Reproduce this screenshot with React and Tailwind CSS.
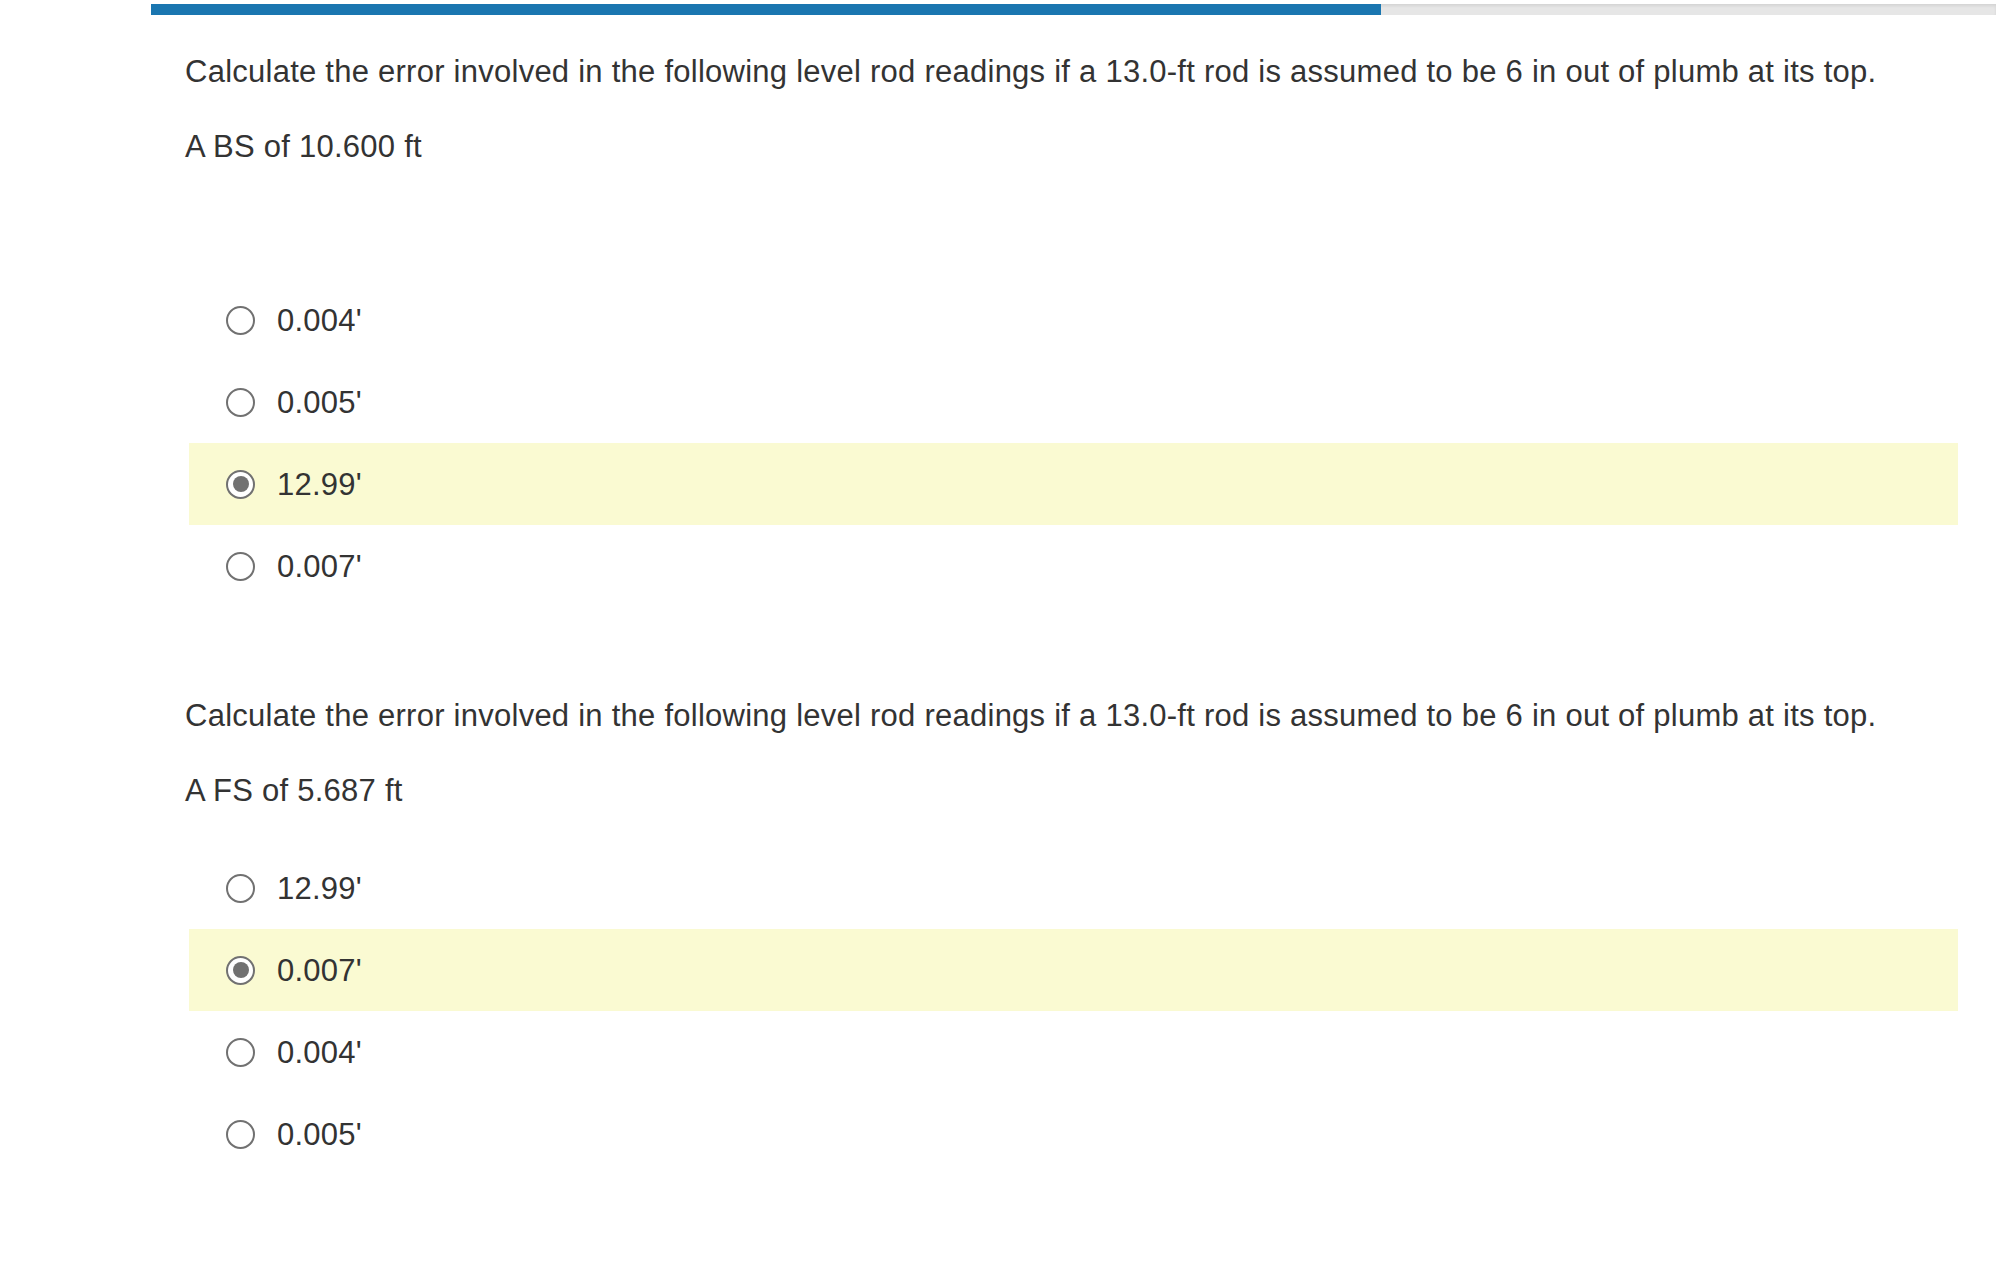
import React from 'react';

const questions = [
  {
    text: 'Calculate the error involved in the following level rod readings if a 13.0-ft rod is assumed to be 6 in out of plumb at its top.',
    sub: 'A BS of 10.600 ft',
    subGap: 'mb-[110px]',
    options: ["0.004'", "0.005'", "12.99'", "0.007'"],
    selected: 2,
  },
  {
    text: 'Calculate the error involved in the following level rod readings if a 13.0-ft rod is assumed to be 6 in out of plumb at its top.',
    sub: 'A FS of 5.687 ft',
    subGap: 'mb-[34px]',
    options: ["12.99'", "0.007'", "0.004'", "0.005'"],
    selected: 1,
  },
];

function Radio({ checked }) {
  return (
    <span className="flex h-[29px] w-[29px] shrink-0 items-center justify-center rounded-full border-[2.3px] border-[#717171] bg-white">
      {checked && <span className="h-[16px] w-[16px] rounded-full bg-[#717171]" />}
    </span>
  );
}

function Question({ q, first }) {
  return (
    <div className={first ? 'mt-[34px]' : 'mt-[86px]'}>
      <p className="pl-[34px] leading-[45px]">{q.text}</p>
      <p className={`mt-[30px] pl-[34px] leading-[45px] ${q.subGap}`}>{q.sub}</p>
      <div className="ml-[38px] w-[1769px]">
        {q.options.map((opt, i) => (
          <label
            key={i}
            className={`flex h-[82px] items-center pl-[37px] ${i === q.selected ? 'bg-[#fafad2]' : ''}`}
          >
            <Radio checked={i === q.selected} />
            <span className="ml-[22px] leading-none">{opt}</span>
          </label>
        ))}
      </div>
    </div>
  );
}

export default function App() {
  return (
    <div className="min-h-screen bg-white text-[31px] tracking-[0.25px] text-[#333333] font-['Liberation_Sans',Arial,sans-serif]">
      <div className="ml-[151px] w-[1845px] pt-[4px]">
        <div className="flex h-[11px] w-full bg-[#e6e6e6] shadow-[inset_0_2px_3px_rgba(0,0,0,0.08)]">
          <div className="h-full w-[1230px] bg-[#1a76b0]" />
        </div>
        {questions.map((q, i) => (
          <Question key={i} q={q} first={i === 0} />
        ))}
      </div>
    </div>
  );
}
